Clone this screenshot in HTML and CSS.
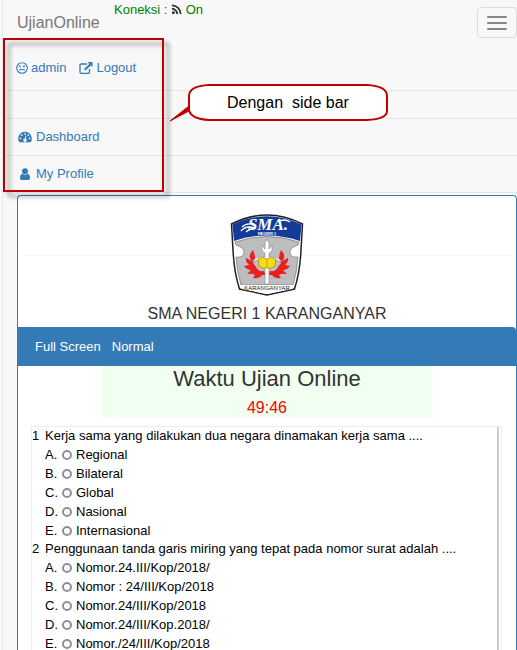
FILE: index.html
```
<!DOCTYPE html>
<html lang="id">
<head>
<meta charset="utf-8">
<title>UjianOnline</title>
<link rel="stylesheet" href="styles.css">
</head>
<body>
<div class="wrapper">
  <header class="topbar">
    <a class="brand" href="#">UjianOnline</a>
    <p class="status">Koneksi : <svg class="rss" viewBox="0 0 12 12" aria-hidden="true"><circle cx="2.6" cy="9.6" r="1.6"/><path d="M1 5.2A5.8 5.8 0 0 1 6.8 11M1 1.5A9.5 9.5 0 0 1 10.5 11"/></svg> On</p>
    <button class="toggle" type="button" aria-label="Menu"><span></span><span></span><span></span></button>
  </header>
  <nav class="side">
    <div class="user">
      <a href="#"><svg class="icon" viewBox="0 0 12 12" aria-hidden="true"><circle cx="6" cy="6" r="5.3" fill="none" stroke="currentColor" stroke-width="1.1"/><circle cx="4" cy="4.5" r=".9"/><circle cx="8" cy="4.5" r=".9"/><path d="M3.2 7.6h5.6" fill="none" stroke="currentColor" stroke-width="1.1"/></svg>admin</a>
      <a href="#"><svg class="icon wide" viewBox="0 0 14 12" aria-hidden="true"><path d="M8 2H2.2Q1 2 1 3.200V10Q1 11.300 2.200 11.300H9.300Q10.500 11.300 10.500 10V7" fill="none" stroke="currentColor" stroke-width="1.300"/><path d="M8.500 0H13.500V5L11.800 3.400 6.400 8.500 5 7.100 10.300 1.900Z"/></svg>Logout</a>
    </div>
    <div class="blank"></div>
    <a class="item" href="#"><svg class="icon wide" viewBox="0 0 14 12" aria-hidden="true"><path d="M7 .8A6.800 6.800 0 0 0 1.300 11.200H12.700A6.800 6.800 0 0 0 7 .8Z"/><g fill="#f8f8f8"><circle cx="2.400" cy="7.300" r=".9"/><circle cx="3.700" cy="4.100" r=".9"/><circle cx="7" cy="2.800" r=".9"/><circle cx="10.300" cy="4.100" r=".9"/><circle cx="11.600" cy="7.300" r=".9"/><path d="M7.600 4.400l.9.300-.7 3a1.600 1.600 0 1 1-.9-.2Z"/></g></svg>Dashboard</a>
    <a class="item" href="#"><svg class="icon wide" viewBox="0 0 14 12" aria-hidden="true"><circle cx="7" cy="3.200" r="3"/><path d="M4.300 5.700Q7 8 9.700 5.700 12 6.200 12 10.200 12 12 10.400 12H3.600Q2 12 2 10.200 2 6.200 4.300 5.700Z"/></svg>My Profile</a>
    <div class="frame"></div>
    <div class="callout">
      <svg viewBox="0 0 222 40" aria-hidden="true"><path d="M21 22V12Q21 2 41 1H199Q219 2 219 12V27Q219 35 199 36H41Q23 35 21 26Z" fill="#fff" stroke="#c00000" stroke-width="2" stroke-linejoin="round"/><path d="M2 37L21 22V27Z" fill="#c00000" stroke="#c00000" stroke-linejoin="round"/></svg>
      <span>Dengan&nbsp; side bar</span>
    </div>
  </nav>
  <main class="panel">
    <div class="school">
      <svg class="logo" viewBox="0 0 74 82" role="img" aria-label="SMA Negeri 1 Karanganyar">
        <path d="M1.500 10Q37-8 72.500 10L71 36Q70 58 64.500 75L37 81 9.500 75Q4 58 3 36Z" fill="#fff" stroke="#222" stroke-width="1.500"/>
        <path d="M5 28Q37 17 69 28L68 31Q59 34 60 39Q61 44 68 43Q67 58 63 71H11Q7 58 6 43Q13 44 14 39Q15 34 6 31Z" fill="#bdbdbf" stroke="#666" stroke-width=".6"/>
        <path d="M2.500 10.500Q37-6 71.500 10.500L70 27Q37 16 4 27Z" fill="#123c98"/>
        <text class="sma" x="38" y="16">SMA.</text>
        <path d="M11 17Q16 11 25 14Q19 15 16 18M12 13Q16 9 22 10M48 8Q54 4 60 8" fill="none" stroke="#fff" stroke-width="1.300"/>
        <text class="negeri" x="37" y="21">NEGERI 1</text>
        <g fill="#e82020"><path d="M23 36Q17 42 22 47L16 44Q15 48 19 51L14 52Q17 56 21 56L17 60Q23 59 25 61L23 64Q29 65 32 61L36 61 34 57Q28 58 26 53L23 49Q27 45 23 36Z"/><path d="M51 36Q57 42 52 47L58 44Q59 48 55 51L60 52Q57 56 53 56L57 60Q51 59 49 61L51 64Q45 65 42 61L38 61 40 57Q46 58 48 53L51 49Q47 45 51 36Z"/></g>
        <path d="M37 25L35 29V35L32 31V37L35 39V43Q26 42 22 48Q29 45 35 45V70H39V45Q45 45 52 48Q48 42 39 43V39L42 37V31L39 35V29Z" fill="#fff" stroke="#888" stroke-width=".6"/>
        <path d="M28 45Q33 42 37 45Q41 42 46 45L45 52Q42 55 37 54Q32 55 29 52Z" fill="#f4dc18" stroke="#9a7a00" stroke-width=".6"/>
        <path d="M37 45V53" stroke="#b09010" stroke-width=".7"/>
        <path d="M11 71H63L62 75 37 80 12 75Z" fill="#fff"/>
        <text class="city" x="37" y="76">KARANGANYAR</text>
      </svg>
      <h1>SMA NEGERI 1 KARANGANYAR</h1>
    </div>
    <nav class="modes"><a href="#">Full Screen</a><a href="#">Normal</a></nav>
    <section class="timer"><h2>Waktu Ujian Online</h2><p>49:46</p></section>
    <form class="exam">
      <fieldset>
        <legend><b>1</b>Kerja sama yang dilakukan dua negara dinamakan kerja sama ....</legend>
        <label><i>A.</i><input type="radio" name="q1">Regional</label>
        <label><i>B.</i><input type="radio" name="q1">Bilateral</label>
        <label><i>C.</i><input type="radio" name="q1">Global</label>
        <label><i>D.</i><input type="radio" name="q1">Nasional</label>
        <label><i>E.</i><input type="radio" name="q1">Internasional</label>
      </fieldset>
      <fieldset>
        <legend><b>2</b>Penggunaan tanda garis miring yang tepat pada nomor surat adalah ....</legend>
        <label><i>A.</i><input type="radio" name="q2">Nomor.24.III/Kop/2018/</label>
        <label><i>B.</i><input type="radio" name="q2">Nomor : 24/III/Kop/2018</label>
        <label><i>C.</i><input type="radio" name="q2">Nomor.24/III/Kop/2018</label>
        <label><i>D.</i><input type="radio" name="q2">Nomor.24/III/Kop.2018/</label>
        <label><i>E.</i><input type="radio" name="q2">Nomor./24/III/Kop/2018</label>
      </fieldset>
    </form>
  </main>
</div>
</body>
</html>
```
FILE: styles.css
```
* { box-sizing: border-box; }
body { margin: 0; background: #f8f8f8; font: 13px/19px "Liberation Sans", Arial, sans-serif; color: #333; }
h1, h2, p { margin: 0; font-weight: 400; }
a { color: #337ab7; text-decoration: none; }
.wrapper { margin-left: 2px; border-left: 1px solid #e7e7e7; }
.topbar { display: flex; align-items: flex-start; height: 45px; padding-left: 14px; }
.brand { color: #777; font-size: 16px; padding-top: 13px; width: 97px; }
.status { color: #008000; flex: 1; }
.rss { width: 11px; height: 11px; vertical-align: -1px; fill: #333; }
.rss path { fill: none; stroke: #333; stroke-width: 2; }
.toggle { width: 40px; height: 31px; margin-top: 7px; padding: 0 9px; border: 1px solid #ddd; border-radius: 4px; background: transparent; display: flex; flex-direction: column; justify-content: center; gap: 4px; }
.toggle span { height: 2px; background: #888; border-radius: 1px; }
.side { position: relative; }
.user { height: 46px; padding: 13px; display: flex; gap: 13px; border-bottom: 1px solid #e7e7e7; }
.icon { width: 12px; height: 12px; margin-right: 3px; vertical-align: -2px; fill: currentColor; }
.wide { width: 14px; }
.blank { height: 28px; border-bottom: 1px solid #e7e7e7; }
.item { display: block; height: 37px; padding: 8px 15px; border-bottom: 1px solid #e7e7e7; }
.item .icon { margin-right: 4px; }
.frame { position: absolute; left: 0; top: -7px; width: 161px; height: 154px; border: 2px solid #c00000; filter: drop-shadow(5px 5px 2px rgba(0, 0, 0, .4)); pointer-events: none; }
.callout { position: absolute; left: 165px; top: 39px; width: 222px; height: 40px; }
.callout svg { display: block; width: 222px; height: 40px; }
.callout span { position: absolute; left: 59px; top: 9px; font-size: 16px; color: #000; white-space: nowrap; }
.panel { margin: 2px 0 0 14px; border: 1px solid #337ab7; border-bottom: 0; border-radius: 4px 4px 0 0; background: #fff; }
.school { padding-top: 18px; text-align: center; height: 131px; background: linear-gradient(#f5f5f5, #f5f5f5) 5px 59px / calc(100% - 8px) 1px no-repeat; }
.logo { display: block; width: 74px; height: 82px; margin: 0 auto 8px; }
.logo text { text-anchor: middle; }
.sma { font: italic bold 17px "Liberation Serif", serif; fill: #fff; }
.negeri { font-size: 4px; font-weight: bold; fill: #fff; }
.city { font-size: 6px; fill: #222; }
h1 { font-size: 16px; line-height: 20px; }
.modes { display: flex; gap: 11px; padding: 10px 17px; background: #337ab7; border-radius: 0 4px 0 0; }
.modes a { color: #fff; }
.timer { width: 330px; max-width: 100%; margin: 0 auto; background: #f0fff0; text-align: center; height: 51px; }
.timer h2 { font-size: 22px; line-height: 25px; }
.timer p { font-size: 16px; line-height: 20px; padding-top: 7px; color: #f00; }
.exam { margin: 9px 14px 0 13px; border: 1px solid #eee; border-bottom: 0; position: relative; color: #000; }
.exam::after { content: ""; position: absolute; right: 2px; top: 0; width: 2px; height: 100%; background: #ccc; }
fieldset { border: 0; margin: 0; padding: 0; }
legend { padding: 0; line-height: 18px; }
legend b { display: inline-block; width: 13px; font-weight: 400; }
label { display: flex; align-items: center; padding-left: 13px; }
label i { width: 17px; font-style: normal; }
label input { appearance: none; width: 10px; height: 10px; margin: 0 4px 0 0; border: 2px solid #8f8f9d; border-radius: 50%; background: #fff; }
```
